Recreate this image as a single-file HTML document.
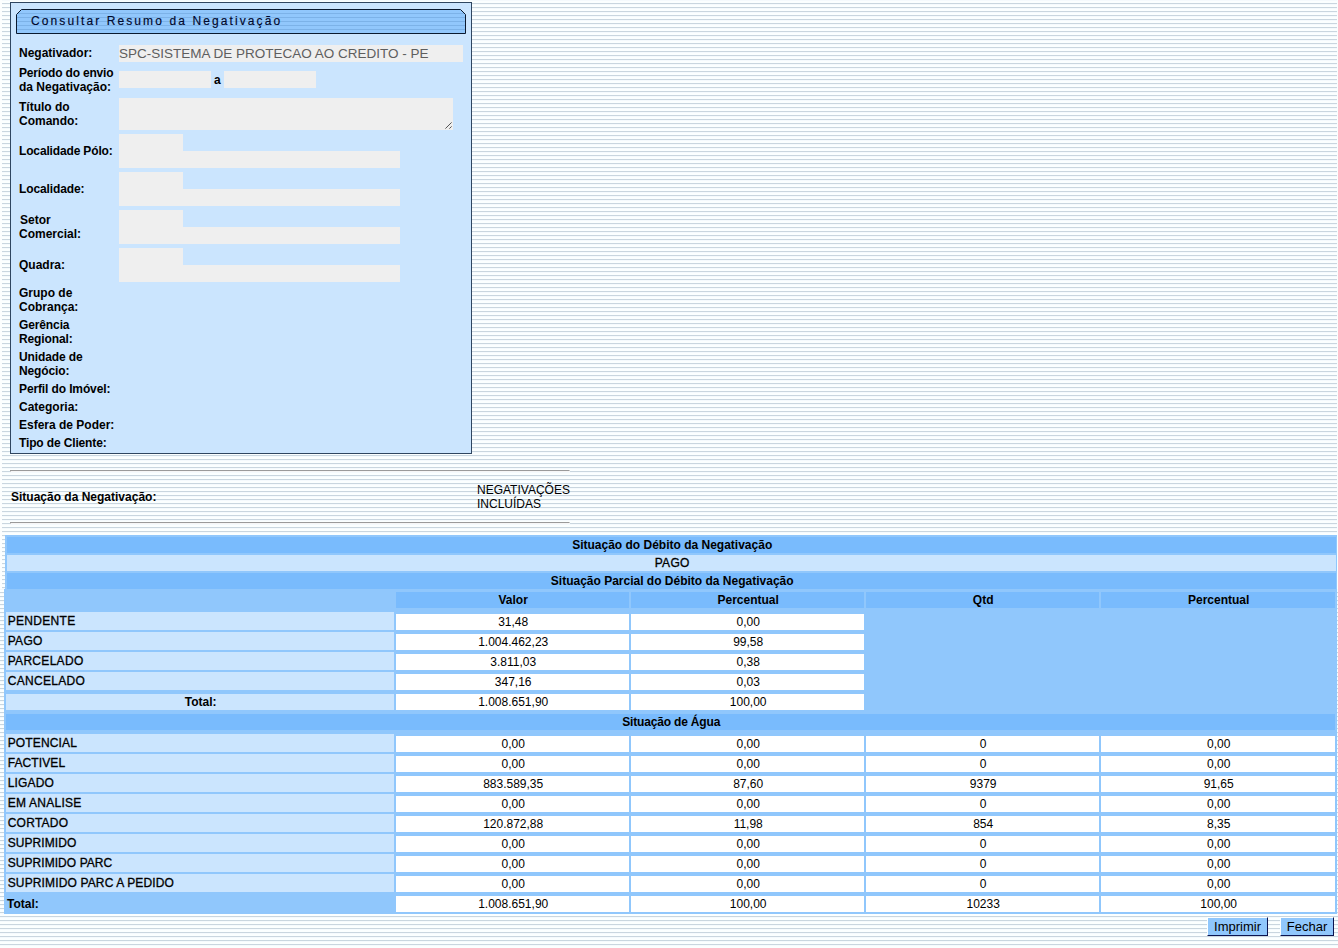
<!DOCTYPE html>
<html><head><meta charset="utf-8"><title>Consultar Resumo da Negativação</title>
<style>
html,body{margin:0;padding:0;}
body{width:1338px;height:948px;position:relative;overflow:hidden;background:#fcfefe;font-family:"Liberation Sans",Arial,sans-serif;font-size:12px;color:#000;}
#bg{position:absolute;left:2px;top:0;width:1335px;height:589px;background:repeating-linear-gradient(to bottom,#f5fafd 0px,#f5fafd 1px,#fbffff 1px,#fbffff 3px,#c9d6df 3px,#c9d6df 4px);}
#bg2{position:absolute;left:0;top:589px;width:1338px;height:359px;background:repeating-linear-gradient(to bottom,#f5fafd 0px,#f5fafd 1px,#fbffff 1px,#fbffff 3px,#c9d6df 3px,#c9d6df 4px);}
.a{position:absolute;white-space:nowrap;}
.b{font-weight:bold;}
.lbl{position:absolute;left:19px;font-weight:bold;font-size:12px;line-height:14px;white-space:nowrap;color:#000;}
.in{position:absolute;background:#efefef;}
.c{position:absolute;box-sizing:border-box;padding-left:1.4px;text-align:center;white-space:nowrap;font-size:12px;line-height:16px;height:16px;}
.w{background:#fff;}
.d{background:#79bbfd;}
.l{background:#cbe5fe;}
.h{font-weight:bold;}
.rl{position:absolute;left:6px;width:386.3px;padding-left:1.7px;height:18px;background:#cbe5fe;font-size:12px;line-height:19px;white-space:nowrap;letter-spacing:.3px;-webkit-text-stroke:.3px #000;}
.btn{position:absolute;top:917px;height:17px;background:#90c7fc;border-top:1px solid #fdffff;border-left:1px solid #fdffff;border-right:1px solid #0c1450;border-bottom:1px solid #0c1450;font-size:13px;line-height:17px;text-align:center;color:#000;}
.hr{position:absolute;left:10px;width:558px;height:0;border-top:1px solid #9a9a9a;border-left:1px solid #9a9a9a;border-bottom:1px solid #f6f6f6;border-right:1px solid #f6f6f6;}
</style></head><body>
<div id="bg"></div><div id="bg2"></div>

<div class="a" style="left:10px;top:2px;width:460px;height:450px;border:1px solid #2f4660;background:#cbe5fe;"></div>
<svg class="a" style="left:16px;top:9px;" width="450" height="26" viewBox="0 0 450 26">
<defs><pattern id="tp" width="4" height="4" patternUnits="userSpaceOnUse" y="2"><rect width="4" height="4" fill="#91c7fc"/><rect y="2" width="4" height="1" fill="#7cb2e8"/></pattern></defs>
<path d="M0.5 5.5 L5.5 0.5 L444.5 0.5 L449.5 5.5 L449.5 24.5 L0.5 24.5 Z" fill="url(#tp)" stroke="#0a1a30" stroke-width="1"/>
</svg>
<div class="a" style="left:31px;top:13px;font-size:12px;line-height:16px;letter-spacing:2.1px;color:#00082c;-webkit-text-stroke:.15px #00082c;">Consultar Resumo da Negativação</div>
<div class="lbl" style="top:46px;left:19px;">Negativador:</div>
<div class="lbl" style="top:66px;left:19px;"><span style="letter-spacing:-.19px">Período do envio</span><br>da Negativação:</div>
<div class="lbl" style="top:100px;left:19px;">Título do<br>Comando:</div>
<div class="lbl" style="top:144px;left:19px;letter-spacing:-0.15px;">Localidade Pólo:</div>
<div class="lbl" style="top:182px;left:19px;letter-spacing:-0.12px;">Localidade:</div>
<div class="lbl" style="top:213px;left:20px;">Setor<br><span style="margin-left:-1px">Comercial:</span></div>
<div class="lbl" style="top:258px;left:19px;">Quadra:</div>
<div class="lbl" style="top:286px;left:19px;">Grupo de<br>Cobrança:</div>
<div class="lbl" style="top:318px;left:19px;letter-spacing:-0.12px;">Gerência<br>Regional:</div>
<div class="lbl" style="top:350px;left:19px;letter-spacing:-0.12px;">Unidade de<br>Negócio:</div>
<div class="lbl" style="top:382px;left:19px;letter-spacing:-0.12px;">Perfil do Imóvel:</div>
<div class="lbl" style="top:400px;left:19px;">Categoria:</div>
<div class="lbl" style="top:418px;left:19px;">Esfera de Poder:</div>
<div class="lbl" style="top:436px;left:19px;letter-spacing:-0.14px;">Tipo de Cliente:</div>
<div class="in" style="left:119px;top:45px;width:344px;height:17px;font-size:13.5px;line-height:17.4px;color:#5e5e5e;white-space:nowrap;">SPC-SISTEMA DE PROTECAO AO CREDITO - PE</div>
<div class="in" style="left:119px;top:71px;width:92px;height:17px;"></div>
<div class="lbl" style="left:214px;top:73px;">a</div>
<div class="in" style="left:224px;top:71px;width:92px;height:17px;"></div>
<div class="in" style="left:119px;top:98px;width:334px;height:32px;"></div>
<svg class="a" style="left:443px;top:120px;" width="10" height="10" viewBox="0 0 10 10"><path d="M2.4 8.6 L8.6 2.4 M6.4 8.6 L8.6 6.4" stroke="#555" stroke-width="1" fill="none"/></svg>
<div class="in" style="left:119px;top:134px;width:64px;height:17px;"></div>
<div class="in" style="left:119px;top:151px;width:281px;height:17px;"></div>
<div class="in" style="left:119px;top:172px;width:64px;height:17px;"></div>
<div class="in" style="left:119px;top:189px;width:281px;height:17px;"></div>
<div class="in" style="left:119px;top:210px;width:64px;height:17px;"></div>
<div class="in" style="left:119px;top:227px;width:281px;height:17px;"></div>
<div class="in" style="left:119px;top:248px;width:64px;height:17px;"></div>
<div class="in" style="left:119px;top:265px;width:281px;height:17px;"></div>
<div class="hr" style="top:470px;"></div>
<div class="hr" style="top:522px;"></div>
<div class="a b" style="left:11px;top:490px;font-size:12px;line-height:14px;">Situação da Negativação:</div>
<div class="a" style="left:477px;top:483px;font-size:12px;line-height:14px;white-space:normal;width:100px;">NEGATIVAÇÕES<br>INCLUÍDAS</div>
<div class="a" style="left:5px;top:535px;width:1332px;height:56px;background:#90c7fc;"></div>
<div class="a" style="left:4px;top:589px;width:1333px;height:325px;background:#90c7fc;"></div>
<div class="c d h" style="left:7px;top:537px;width:1329px;">Situação do Débito da Negativação</div>
<div class="c l" style="left:7px;top:555px;width:1329px;letter-spacing:.3px;-webkit-text-stroke:.3px #000;">PAGO</div>
<div class="c d h" style="left:7px;top:573px;width:1329px;">Situação Parcial do Débito da Negativação</div>
<div class="c d h" style="left:396px;top:592px;width:233px;">Valor</div>
<div class="c d h" style="left:631px;top:592px;width:233px;">Percentual</div>
<div class="c d h" style="left:866px;top:592px;width:233px;">Qtd</div>
<div class="c d h" style="left:1101px;top:592px;width:234px;">Percentual</div>
<div class="rl" style="top:612px;">PENDENTE</div>
<div class="c w" style="left:396px;top:614px;width:233px;">31,48</div>
<div class="c w" style="left:631px;top:614px;width:233px;">0,00</div>
<div class="rl" style="top:632px;">PAGO</div>
<div class="c w" style="left:396px;top:634px;width:233px;">1.004.462,23</div>
<div class="c w" style="left:631px;top:634px;width:233px;">99,58</div>
<div class="rl" style="top:652px;">PARCELADO</div>
<div class="c w" style="left:396px;top:654px;width:233px;">3.811,03</div>
<div class="c w" style="left:631px;top:654px;width:233px;">0,38</div>
<div class="rl" style="top:672px;">CANCELADO</div>
<div class="c w" style="left:396px;top:674px;width:233px;">347,16</div>
<div class="c w" style="left:631px;top:674px;width:233px;">0,03</div>
<div class="c l h" style="left:6px;top:694px;width:388px;">Total:</div>
<div class="c w" style="left:396px;top:694px;width:233px;">1.008.651,90</div>
<div class="c w" style="left:631px;top:694px;width:233px;">100,00</div>
<div class="c d h" style="left:6px;top:714px;width:1329px;letter-spacing:-.17px;">Situação de Água</div>
<div class="rl" style="top:734px;letter-spacing:0.14px;">POTENCIAL</div>
<div class="c w" style="left:396px;top:736px;width:233px;">0,00</div>
<div class="c w" style="left:631px;top:736px;width:233px;">0,00</div>
<div class="c w" style="left:866px;top:736px;width:233px;">0</div>
<div class="c w" style="left:1101px;top:736px;width:234px;">0,00</div>
<div class="rl" style="top:754px;letter-spacing:0.1px;">FACTIVEL</div>
<div class="c w" style="left:396px;top:756px;width:233px;">0,00</div>
<div class="c w" style="left:631px;top:756px;width:233px;">0,00</div>
<div class="c w" style="left:866px;top:756px;width:233px;">0</div>
<div class="c w" style="left:1101px;top:756px;width:234px;">0,00</div>
<div class="rl" style="top:774px;letter-spacing:0.17px;">LIGADO</div>
<div class="c w" style="left:396px;top:776px;width:233px;">883.589,35</div>
<div class="c w" style="left:631px;top:776px;width:233px;">87,60</div>
<div class="c w" style="left:866px;top:776px;width:233px;">9379</div>
<div class="c w" style="left:1101px;top:776px;width:234px;">91,65</div>
<div class="rl" style="top:794px;letter-spacing:0.24px;">EM ANALISE</div>
<div class="c w" style="left:396px;top:796px;width:233px;">0,00</div>
<div class="c w" style="left:631px;top:796px;width:233px;">0,00</div>
<div class="c w" style="left:866px;top:796px;width:233px;">0</div>
<div class="c w" style="left:1101px;top:796px;width:234px;">0,00</div>
<div class="rl" style="top:814px;letter-spacing:0.25px;">CORTADO</div>
<div class="c w" style="left:396px;top:816px;width:233px;">120.872,88</div>
<div class="c w" style="left:631px;top:816px;width:233px;">11,98</div>
<div class="c w" style="left:866px;top:816px;width:233px;">854</div>
<div class="c w" style="left:1101px;top:816px;width:234px;">8,35</div>
<div class="rl" style="top:834px;letter-spacing:0.08px;">SUPRIMIDO</div>
<div class="c w" style="left:396px;top:836px;width:233px;">0,00</div>
<div class="c w" style="left:631px;top:836px;width:233px;">0,00</div>
<div class="c w" style="left:866px;top:836px;width:233px;">0</div>
<div class="c w" style="left:1101px;top:836px;width:234px;">0,00</div>
<div class="rl" style="top:854px;letter-spacing:0.06px;">SUPRIMIDO PARC</div>
<div class="c w" style="left:396px;top:856px;width:233px;">0,00</div>
<div class="c w" style="left:631px;top:856px;width:233px;">0,00</div>
<div class="c w" style="left:866px;top:856px;width:233px;">0</div>
<div class="c w" style="left:1101px;top:856px;width:234px;">0,00</div>
<div class="rl" style="top:874px;letter-spacing:0.14px;">SUPRIMIDO PARC A PEDIDO</div>
<div class="c w" style="left:396px;top:876px;width:233px;">0,00</div>
<div class="c w" style="left:631px;top:876px;width:233px;">0,00</div>
<div class="c w" style="left:866px;top:876px;width:233px;">0</div>
<div class="c w" style="left:1101px;top:876px;width:234px;">0,00</div>
<div class="a b" style="left:7px;top:896px;font-size:12px;line-height:16px;">Total:</div>
<div class="c w" style="left:396px;top:896px;width:233px;">1.008.651,90</div>
<div class="c w" style="left:631px;top:896px;width:233px;">100,00</div>
<div class="c w" style="left:866px;top:896px;width:233px;">10233</div>
<div class="c w" style="left:1101px;top:896px;width:234px;">100,00</div>
<div class="btn" style="left:1207px;width:59px;">Imprimir</div>
<div class="btn" style="left:1280px;width:52px;">Fechar</div>
</body></html>
